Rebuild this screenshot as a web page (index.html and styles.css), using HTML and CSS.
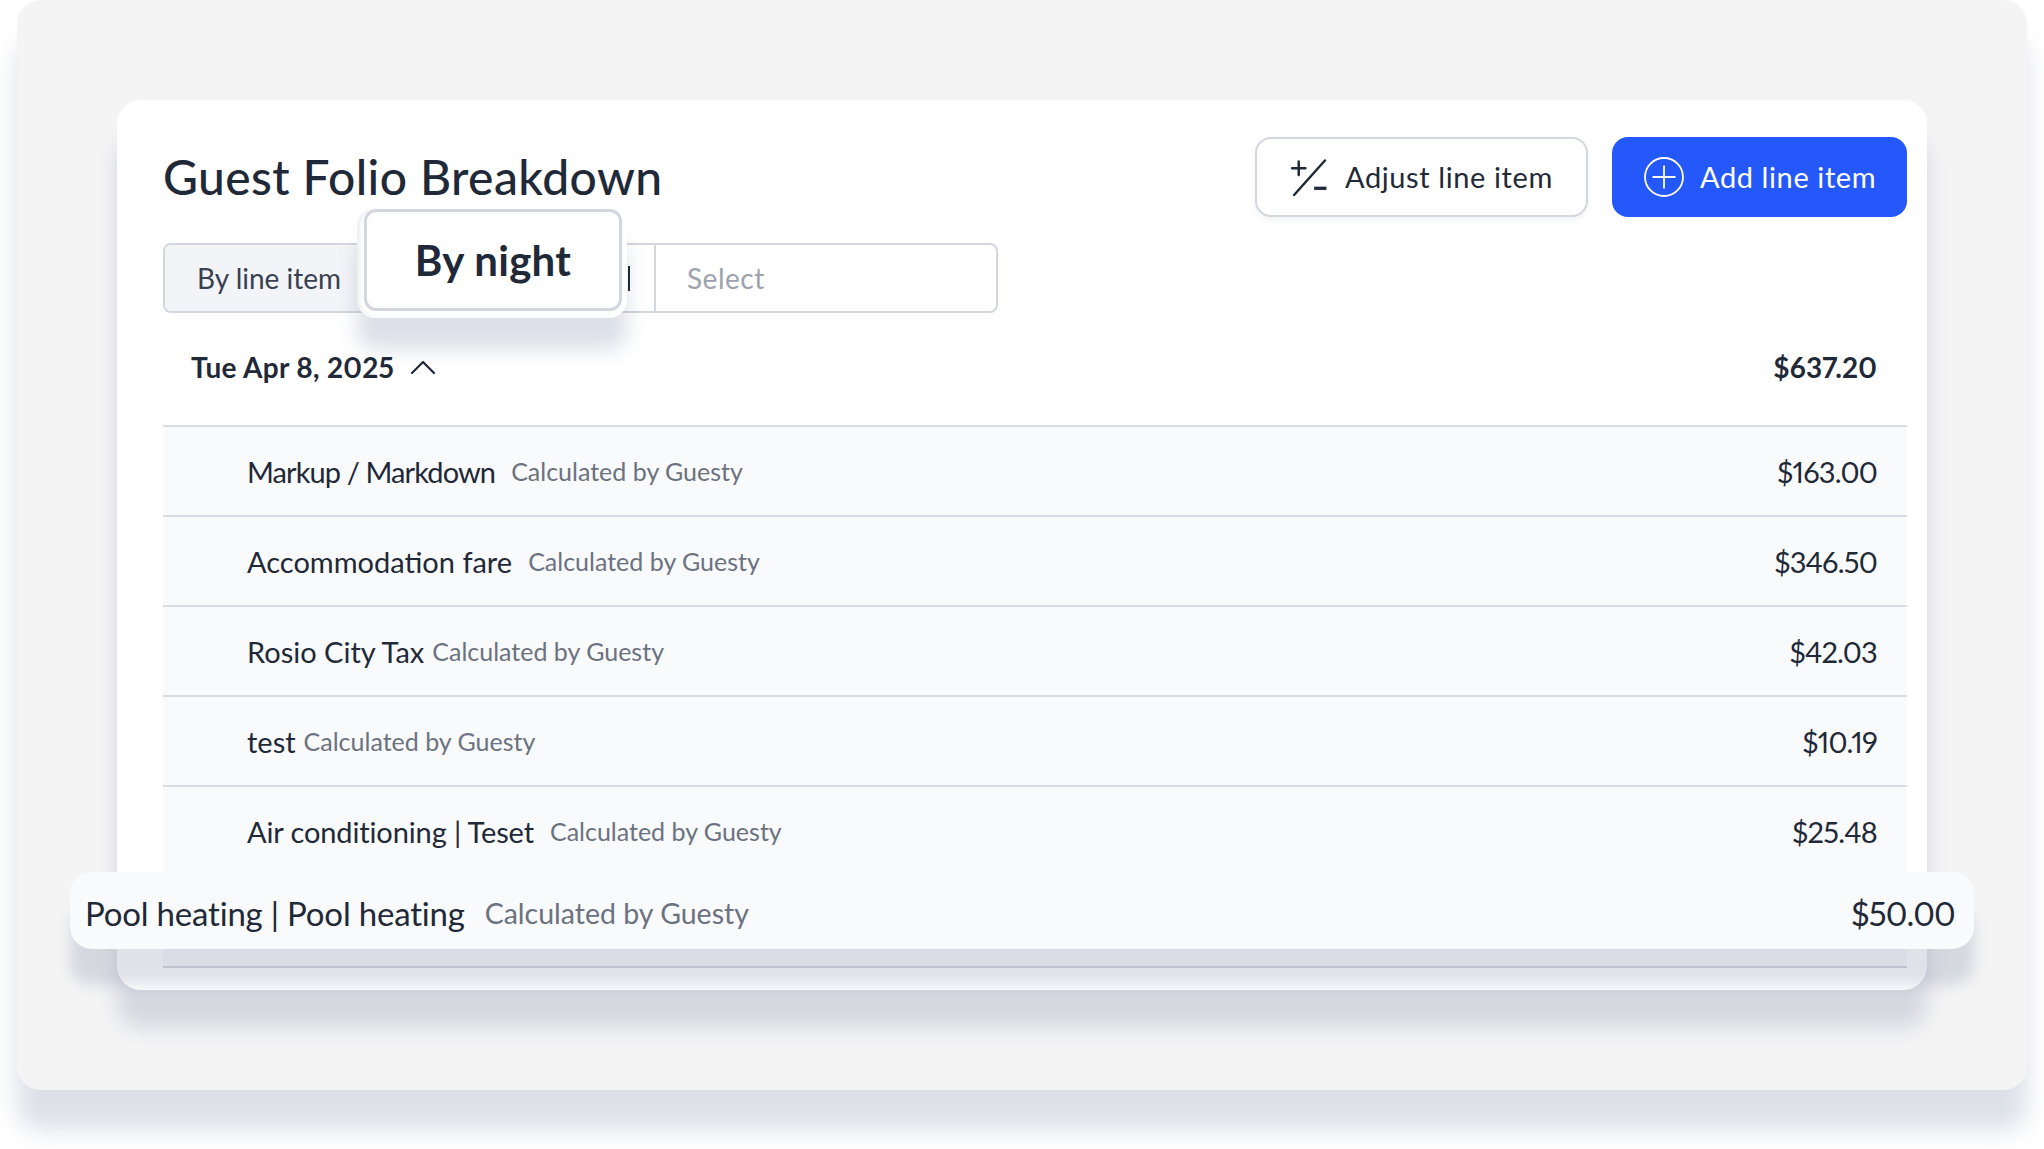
FILE: index.html
```html
<!DOCTYPE html>
<html lang="en">
<head>
<meta charset="utf-8">
<title>Guest Folio Breakdown</title>
<link rel="stylesheet" href="styles.css">
</head>
<body>
<div class="panel">
  <main class="card">
    <header class="head">
      <h1 class="title">Guest Folio Breakdown</h1>
      <div class="actions">
        <button class="btn btn-ghost">
          <svg class="ico-adjust" viewBox="0 0 36 36" fill="none" stroke="#1f2937" stroke-width="2.4" stroke-linecap="round"><path d="M1 9h13M7.500 2.500v13M33 1.500 3 35"/><path d="M22.500 28.500h12" stroke-width="3.200" stroke-linecap="butt"/></svg>
          <span>Adjust line item</span>
        </button>
        <button class="btn btn-primary">
          <svg class="ico-add" viewBox="0 0 40 40" fill="none" stroke="#fff" stroke-width="1.800"><circle cx="20" cy="20" r="19"/><path d="M20 8.500v23M8.500 20h23"/></svg>
          <span>Add line item</span>
        </button>
      </div>
    </header>
    <div class="filters">
      <div class="seg seg-active">By line item</div>
      <div class="seg seg-night"></div>
      <div class="seg seg-select">Select</div>
    </div>
    <div class="day">
      <div class="day-label">
        <span>Tue Apr 8, 2025</span>
        <svg class="chev" viewBox="0 0 26 16" fill="none" stroke="#1f2937" stroke-width="2.200" stroke-linecap="round" stroke-linejoin="round"><path d="M2 14 13 3l11 11"/></svg>
      </div>
      <span class="day-total">$637.20</span>
    </div>
    <div class="row"><div class="row-main"><span class="name narrow">Markup / Markdown</span><span class="sub">Calculated by Guesty</span></div><span class="amount">$163.00</span></div>
    <div class="row"><div class="row-main"><span class="name">Accommodation fare</span><span class="sub">Calculated by Guesty</span></div><span class="amount">$346.50</span></div>
    <div class="row"><div class="row-main tight"><span class="name">Rosio City Tax</span><span class="sub">Calculated by Guesty</span></div><span class="amount">$42.03</span></div>
    <div class="row"><div class="row-main tight"><span class="name">test</span><span class="sub">Calculated by Guesty</span></div><span class="amount">$10.19</span></div>
    <div class="row"><div class="row-main"><span class="name slim">Air conditioning | Teset</span><span class="sub">Calculated by Guesty</span></div><span class="amount">$25.48</span></div>
    <div class="row row-last"></div>
  </main>

  <div class="tab-pop"><div class="tab-pop-inner">By night</div></div>
  <div class="float-row">
    <div class="float-main"><span class="float-name">Pool heating | Pool heating</span><span class="float-sub">Calculated by Guesty</span></div>
    <span class="float-amount">$50.00</span>
  </div>
</div>
</body>
</html>
```
FILE: styles.css
```css
* { box-sizing: border-box; }
html, body { margin: 0; height: 1149px; overflow: hidden; background: #fff; }
body {
  font-family: "Lato", "Open Sans", sans-serif; color: #1f2937;
  font-variant-numeric: proportional-nums;
}

.panel {
  position: relative;
  margin-left: 17px;
  width: 2010px;
  height: 1090px;
  padding: 100px 100px 100px;
  background: #f4f4f5;
  border-radius: 24px;
  box-shadow: 0 40px 24px rgba(45, 60, 110, .155);
}
.card {
  height: 890px;
  padding: 37px 20px 0 46px;
  background: #fff;
  border-radius: 24px;
  box-shadow: 0 38px 20px rgba(45, 60, 110, .15);
}
.head { display: flex; justify-content: space-between; align-items: center; height: 80px; }
.title { margin: 0; font-size: 48px; font-weight: 500; line-height: 1; letter-spacing: .4px; color: #1f2937; }
.actions { display: flex; gap: 24px; }
.btn {
  display: flex; align-items: center; height: 80px; border-radius: 16px;
  font: 400 29px/1 "Lato", sans-serif; letter-spacing: .6px; white-space: nowrap; cursor: pointer;
}
.btn span { position: relative; top: -1px; }
.btn-ghost {
  width: 333px; padding: 0 0 0 34px; gap: 17px;
  background: #fff; color: #1f2937; border: 2px solid #d3d6df;
  box-shadow: 0 3px 6px rgba(38, 50, 90, .06);
}
.btn-primary { width: 295px; padding: 0 0 0 32px; gap: 16px; background: #2558fb; color: #fff; border: 0; }
.ico-adjust { width: 37px; height: 37px; flex: none; }
.ico-add { width: 40px; height: 40px; flex: none; }

.filters {
  display: flex; width: 835px; height: 70px; margin-top: 26px;
  border: 2px solid #d3d6df; border-radius: 8px; font-size: 28px; overflow: hidden;
}
.seg { display: flex; align-items: center; }
.seg-active { width: 200px; padding-left: 32px; background: #f3f4f7; color: #374151; white-space: nowrap; }
.seg-night { width: 291px; justify-content: flex-end; padding-right: 24px; border-right: 2px solid #d3d6df; }
.seg-night::after { content: ""; width: 2px; height: 25px; background: #1f2937; }
.seg-select { flex: 1; padding-left: 31px; color: #9ca3af; letter-spacing: .5px; }

.day {
  display: flex; justify-content: space-between; align-items: center;
  height: 114px; padding: 0 30px 5px 28px;
  border-bottom: 2px solid #d9dce4; font-size: 28px; font-weight: 700;
}
.day-label { display: flex; align-items: center; gap: 16px; letter-spacing: .3px; }
.chev { width: 26px; height: 16px; }
.day-total { letter-spacing: .1px; }

.row {
  display: flex; justify-content: space-between; align-items: center;
  height: 90px; padding: 0 30px 0 84px; background: #f9fafc;
  border-bottom: 2px solid #d9dce4; font-size: 29px;
}
.row-last { height: 91px; border-bottom-color: #d6d9e1; }
.row-main { display: flex; align-items: center; gap: 16px; }
.row-main.tight { gap: 8px; }
.name.narrow { letter-spacing: -.9px; }
.name.slim { letter-spacing: -.12px; }
.sub { font-size: 25px; color: #6b7280; }
.amount { letter-spacing: -.8px; }

.tab-pop {
  position: absolute; left: 340px; top: 208px; width: 270px; height: 110px;
  padding: 1px 5px 7px 7px; background: #fff; border-radius: 18px;
  box-shadow: inset 5px 0 4px -2px #eceef2, 0 32px 20px rgba(45, 60, 110, .16);
}
.tab-pop-inner {
  display: flex; align-items: center; justify-content: center; height: 100%;
  border: 3px solid #d3d6df; border-radius: 12px; background: #fff;
  font-size: 42px; font-weight: 700; letter-spacing: .3px; color: #1f2937;
}

.float-row {
  position: absolute; left: 53px; top: 872px; width: 1904px; height: 77px;
  display: flex; justify-content: space-between; align-items: center;
  padding: 4px 19px 0 15px; background: #f9fafc; border-radius: 22px;
  box-shadow: 0 36px 14px rgba(45, 60, 110, .15);
}
.float-main { display: flex; align-items: center; gap: 20px; }
.float-name { font-size: 33px; letter-spacing: -.2px; }
.float-sub { font-size: 28.5px; color: #6b7280; }
.float-amount { font-size: 33px; letter-spacing: -.8px; }
```
